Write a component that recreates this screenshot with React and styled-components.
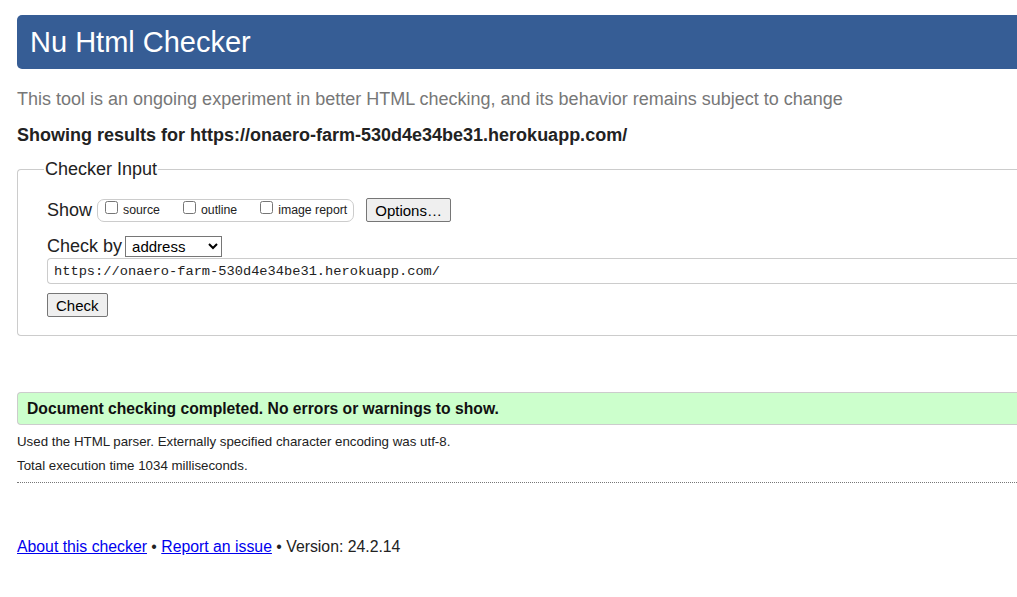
import React from "react";
import styled, { createGlobalStyle } from "styled-components";

const GlobalStyle = createGlobalStyle`
  html, body {
    margin: 0;
    padding: 0;
    background: #ffffff;
    overflow: hidden;
  }
  body {
    font-family: "Liberation Sans", Arial, sans-serif;
    color: #222;
  }
`;

const Page = styled.div`
  width: 1100px;
  padding: 15px 0 0 17px;
`;

const Header = styled.h1`
  margin: 0;
  height: 54px;
  display: flex;
  align-items: center;
  padding-left: 13px;
  background-color: #365d95;
  color: #ffffff;
  font-size: 29px;
  font-weight: normal;
  border-radius: 5px 0 0 5px;
`;

const Intro = styled.p`
  margin: 19px 0 0;
  font-size: 18px;
  color: #777;
  line-height: 22px;
`;

const Results = styled.p`
  margin: 14px 0 0;
  font-size: 18px;
  font-weight: bold;
  color: #222;
  line-height: 22px;
`;

const Fieldset = styled.fieldset`
  margin: 13px 0 0;
  padding: 8px 29px 18px;
  border: 1px solid #ccc;
  border-radius: 4px 0 0 4px;
  border-right: none;
`;

const Legend = styled.legend`
  font-size: 18px;
  color: #222;
  padding: 0 1px;
  margin-left: -3px;
`;

const Row = styled.div`
  display: flex;
  align-items: center;
  margin-top: ${(p) => p.$top || 0}px;
`;

const Label = styled.span`
  font-size: 18px;
  color: #222;
  margin-right: ${(p) => p.$gap || 3}px;
`;

const Options = styled.div`
  display: flex;
  align-items: center;
  height: 21px;
  border: 1px solid #ccc;
  border-radius: 7px;
  padding: 0 6px 0 7px;
  gap: 23px;
`;

const Opt = styled.label`
  display: flex;
  align-items: center;
  font-size: 12.3px;
  color: #222;
  gap: 5px;

  input {
    margin: 0;
    width: 13px;
    height: 13px;
    position: relative;
    top: -3px;
  }
`;

const Button = styled.button`
  font-family: "Liberation Sans", Arial, sans-serif;
  font-size: 15px;
  color: #000;
  background: #efefef;
  border: 1px solid #767676;
  border-radius: 2px;
  height: 24px;
  padding: 0 8px;
  margin-left: ${(p) => p.$left || 0}px;
`;

const Select = styled.select`
  font-family: "Liberation Sans", Arial, sans-serif;
  font-size: 15px;
  width: 97px;
  height: 21px;
  border: 1px solid #767676;
  border-radius: 0;
  background: #fff;
  padding: 0 2px;
`;

const UrlInput = styled.input`
  display: block;
  box-sizing: border-box;
  width: 100%;
  margin-top: 1px;
  height: 26px;
  border: 1px solid #ccc;
  border-right: none;
  border-radius: 4px 0 0 4px;
  padding: 0 6px;
  font-family: "Liberation Mono", Consolas, monospace;
  font-size: 13.7px;
  color: #222;
`;

const Success = styled.div`
  margin-top: 56px;
  height: 33px;
  box-sizing: border-box;
  display: flex;
  align-items: center;
  padding-left: 9px;
  background: #ccffcc;
  border: 1px solid #ccc;
  border-right: none;
  border-radius: 4px 0 0 4px;
  font-size: 15.7px;
  font-weight: bold;
  color: #111;
`;

const Detail = styled.p`
  margin: ${(p) => p.$top}px 0 0;
  font-size: 13.3px;
  color: #222;
  line-height: 16px;
`;

const Rule = styled.hr`
  margin: 8px 0 0;
  border: none;
  border-top: 1px dotted #777;
`;

const Footer = styled.p`
  margin: 55px 0 0;
  font-size: 15.8px;
  color: #222;

  a {
    color: #0000ee;
    text-decoration: underline;
  }
`;

export default function App() {
  return (
    <>
      <GlobalStyle />
      <Page>
        <Header>Nu Html Checker</Header>
        <Intro>
          This tool is an ongoing experiment in better HTML checking, and its behavior remains subject to change
        </Intro>
        <Results>Showing results for https://onaero-farm-530d4e34be31.herokuapp.com/</Results>

        <Fieldset>
          <Legend>Checker Input</Legend>
          <Row $top={10}>
            <Label $gap={5}>Show</Label>
            <Options>
              <Opt>
                <input type="checkbox" /> source
              </Opt>
              <Opt>
                <input type="checkbox" /> outline
              </Opt>
              <Opt>
                <input type="checkbox" /> image report
              </Opt>
            </Options>
            <Button $left={12}>Options…</Button>
          </Row>
          <Row $top={14}>
            <Label>Check by</Label>
            <Select defaultValue="address">
              <option value="address">address</option>
              <option value="file">file upload</option>
              <option value="text">text input</option>
            </Select>
          </Row>
          <UrlInput defaultValue="https://onaero-farm-530d4e34be31.herokuapp.com/" />
          <Row $top={9}>
            <Button>Check</Button>
          </Row>
        </Fieldset>

        <Success>Document checking completed. No errors or warnings to show.</Success>
        <Detail $top={9}>Used the HTML parser. Externally specified character encoding was utf-8.</Detail>
        <Detail $top={8}>Total execution time 1034 milliseconds.</Detail>
        <Rule />

        <Footer>
          <a href="#about">About this checker</a> • <a href="#issue">Report an issue</a> • Version: 24.2.14
        </Footer>
      </Page>
    </>
  );
}
